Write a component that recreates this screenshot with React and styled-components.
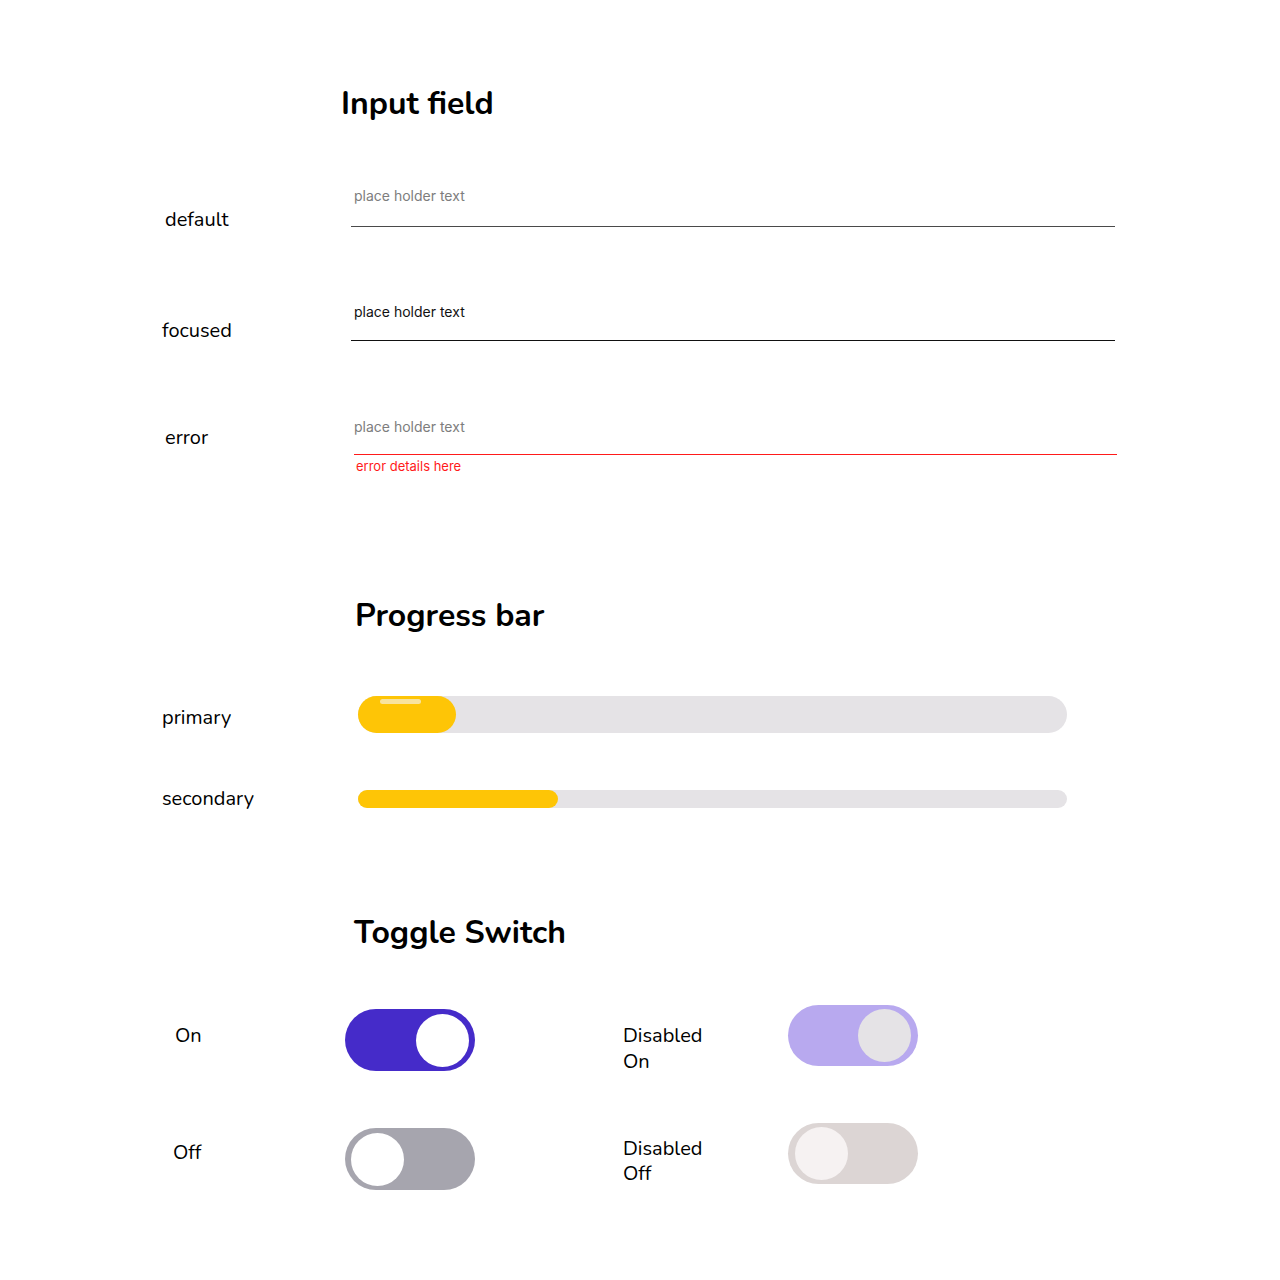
import React from 'react';
import styled, { createGlobalStyle } from 'styled-components';

const GlobalStyle = createGlobalStyle`
  body {
    margin: 0;
    background: #ffffff;
    font-family: 'Nunito', Lato, 'Open Sans', sans-serif;
    color: #000000;
  }
`;

const Page = styled.main`
  width: 1280px;
  min-height: 1280px;
  padding-top: 86px;
  box-sizing: border-box;
`;

const Heading = styled.h2`
  margin: 0 0 ${(props) => props.$gap}px ${(props) => props.$indent}px;
  font-size: 32px;
  line-height: 36px;
  font-weight: 700;
`;

// one labelled row; the height is fixed so the next row starts where it should
const Row = styled.div`
  display: grid;
  grid-template-columns: ${(props) => props.$cols};
  align-items: start;
  height: ${(props) => props.$h}px;
`;

const Label = styled.span`
  display: block;
  padding-left: ${(props) => props.$x}px;
  margin-top: ${(props) => props.$offset || 0}px;
  font-size: 20px;
  line-height: ${(props) => props.$lh || 24}px;
`;

const FIELD = {
  default: { line: '#4a4a4a', text: '#7d7d7d', shift: 0, indent: 3, width: 764 },
  focused: { line: '#111111', text: '#111111', shift: 0, indent: 3, width: 764 },
  error: { line: '#ff1a1a', text: '#7d7d7d', shift: 3, indent: 0, width: 763 },
};

const Field = styled.div`
  box-sizing: border-box;
  width: ${(props) => FIELD[props.$variant].width}px;
  margin-left: ${(props) => FIELD[props.$variant].shift}px;
  padding: 0 0 ${(props) => props.$pad}px ${(props) => FIELD[props.$variant].indent}px;
  border-bottom: 1px solid ${(props) => FIELD[props.$variant].line};
  font-family: Inter, 'Noto Sans', sans-serif;
  font-size: 14px;
  line-height: 20px;
  color: ${(props) => FIELD[props.$variant].text};
`;

const ErrorText = styled.div`
  margin: 3px 0 0 5px;
  font-family: Inter, 'Noto Sans', sans-serif;
  font-size: 13px;
  line-height: 16px;
  color: #ff1a1a;
`;

const Track = styled.div`
  position: relative;
  height: ${(props) => props.$h}px;
  border-radius: ${(props) => props.$h / 2}px;
  background: #e5e3e6;
`;

const Fill = styled.div`
  position: relative;
  height: 100%;
  border-radius: inherit;
  background: #fec506;
`;

const Shine = styled.span`
  position: absolute;
  left: 22px;
  top: 3px;
  width: 41px;
  height: 5px;
  border-radius: 3px;
  background: #f8e39e;
`;

const TOGGLE = {
  on: { track: '#452bc9', knob: '#ffffff' },
  off: { track: '#a6a5ae', knob: '#ffffff' },
  disabledOn: { track: '#b8a9ef', knob: '#e5e3e6' },
  disabledOff: { track: '#dcd5d4', knob: '#f6f2f2' },
};

const Switch = styled.div`
  display: flex;
  align-items: center;
  justify-content: ${(props) => (props.$checked ? 'flex-end' : 'flex-start')};
  box-sizing: border-box;
  width: 130px;
  height: ${(props) => props.$h}px;
  margin-top: ${(props) => props.$offset || 0}px;
  padding: 0 ${(props) => props.$pad}px;
  border-radius: 31px;
  background: ${(props) => TOGGLE[props.$kind].track};
`;

const Knob = styled.span`
  width: 53px;
  height: 53px;
  border-radius: 50%;
  background: ${(props) => TOGGLE[props.$kind].knob};
`;

const Toggle = ({ kind, checked, h = 62, pad = 6, offset }) => (
  <Switch $kind={kind} $checked={checked} $h={h} $pad={pad} $offset={offset}>
    <Knob $kind={kind} />
  </Switch>
);

const FIELD_COLS = '351px 766px';
const BAR_COLS = '358px 709px';
const TOGGLE_COLS = '345px 278px 165px 130px';

const progress = [
  { name: 'primary', h: 37, value: 98, rowH: 94, offset: 10 },
  { name: 'secondary', h: 18, value: 200, rowH: 125, offset: -3 },
];

export default function App() {
  return (
    <Page>
      <GlobalStyle />
      <Heading $indent={341} $gap={64}>Input field</Heading>

      <Row $cols={FIELD_COLS} $h={116}>
        <Label $x={165} $offset={22}>default</Label>
        <Field $variant="default" $pad={20}>place holder text</Field>
      </Row>
      <Row $cols={FIELD_COLS} $h={115}>
        <Label $x={162} $offset={17}>focused</Label>
        <Field $variant="focused" $pad={18}>place holder text</Field>
      </Row>
      <Row $cols={FIELD_COLS} $h={181}>
        <Label $x={165} $offset={9}>error</Label>
        <div>
          <Field $variant="error" $pad={17}>place holder text</Field>
          <ErrorText>error details here</ErrorText>
        </div>
      </Row>

      <Heading $indent={355} $gap={62}>Progress bar</Heading>
      {progress.map((bar) => (
        <Row key={bar.name} $cols={BAR_COLS} $h={bar.rowH}>
          <Label $x={162} $offset={bar.offset}>{bar.name}</Label>
          <Track $h={bar.h}>
            <Fill style={{ width: bar.value }}>
              {bar.name === 'primary' && <Shine />}
            </Fill>
          </Track>
        </Row>
      ))}

      <Heading $indent={354} $gap={54}>Toggle Switch</Heading>
      <Row $cols={TOGGLE_COLS} $h={118}>
        <Label $x={175} $offset={19}>On</Label>
        <Toggle kind="on" checked offset={4} />
        <Label $x={0} $offset={18} $lh={26}>Disabled<br />On</Label>
        <Toggle kind="disabledOn" checked h={61} pad={7} />
      </Row>
      <Row $cols={TOGGLE_COLS} $h={70}>
        <Label $x={173} $offset={18}>Off</Label>
        <Toggle kind="off" offset={5} />
        <Label $x={0} $offset={13} $lh={25}>Disabled<br />Off</Label>
        <Toggle kind="disabledOff" h={61} pad={7} />
      </Row>
    </Page>
  );
}
